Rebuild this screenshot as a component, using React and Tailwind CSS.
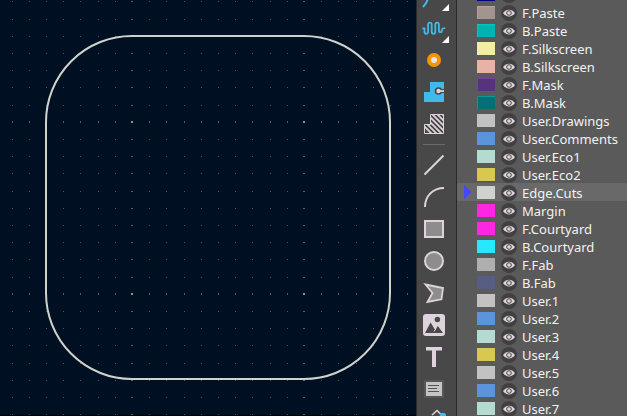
import React from "react";

const layers = [
  ["F.Paste", "bg-[#a4948f]", "border-[#b59f9a]"],
  ["B.Paste", "bg-[#00b3b3]", "border-[#00c6c6]"],
  ["F.Silkscreen", "bg-[#f2eda1]", "border-[#f2eda1]"],
  ["B.Silkscreen", "bg-[#e8b2a7]", "border-[#e8b2a7]"],
  ["F.Mask", "bg-[#58337d]", "border-[#7c3fa0]"],
  ["B.Mask", "bg-[#027074]", "border-[#04989a]"],
  ["User.Drawings", "bg-[#c2c2c2]", "border-[#c2c2c2]"],
  ["User.Comments", "bg-[#5994dc]", "border-[#5994dc]"],
  ["User.Eco1", "bg-[#b4dbd2]", "border-[#b4dbd2]"],
  ["User.Eco2", "bg-[#d8c852]", "border-[#d8c852]"],
  ["Edge.Cuts", "bg-[#d0d2cd]", "border-[#d0d2cd]"],
  ["Margin", "bg-[#ff26e2]", "border-[#ff26e2]"],
  ["F.Courtyard", "bg-[#ff26e2]", "border-[#ff26e2]"],
  ["B.Courtyard", "bg-[#26e9ff]", "border-[#26e9ff]"],
  ["F.Fab", "bg-[#afafaf]", "border-[#afafaf]"],
  ["B.Fab", "bg-[#585d84]", "border-[#585d84]"],
  ["User.1", "bg-[#c2c2c2]", "border-[#c2c2c2]"],
  ["User.2", "bg-[#5994dc]", "border-[#5994dc]"],
  ["User.3", "bg-[#b4dbd2]", "border-[#b4dbd2]"],
  ["User.4", "bg-[#d8c852]", "border-[#d8c852]"],
  ["User.5", "bg-[#c2c2c2]", "border-[#c2c2c2]"],
  ["User.6", "bg-[#5994dc]", "border-[#5994dc]"],
  ["User.7", "bg-[#b4dbd2]", "border-[#b4dbd2]"],
];

const INK = "#ded3dd";
const BLUE = "#42b8eb";

const tools = [
  {
    name: "Route track",
    menu: true,
    art: <path d="M6 14Q5 19 1 23" fill="none" stroke={BLUE} strokeWidth="2" />,
  },
  {
    name: "Tune track length",
    menu: true,
    art: (
      <path
        d="M.5 12.5h2v3.3a1.8 2 0 0 0 3.6 0V8.6a1.8 2 0 0 1 3.6 0v7.2a1.8 2 0 0 0 3.6 0V8.6a1.8 2 0 0 1 3.6 0v5.6a1.5 2 0 0 0 3 0c0-1.8.6-2 3.3-2"
        fill="none"
        stroke={BLUE}
        strokeWidth="1.8"
      />
    ),
  },
  {
    name: "Add via",
    art: <circle cx="12" cy="12" r="5" fill="#e8e4ea" stroke="#f59505" strokeWidth="4" />,
  },
  {
    name: "Add filled zone",
    art: (
      <>
        <path d="M8 2h14v20H2V12h6z" fill={BLUE} />
        <circle cx="16.500" cy="11" r="3.800" fill="#484848" />
        <path d="M16 9h6v4h-6z" fill="#484848" />
        <circle cx="16.500" cy="11" r="2.200" fill={INK} />
        <path d="M16 11h6" stroke={INK} strokeWidth="1.800" />
      </>
    ),
  },
  {
    name: "Add rule area",
    art: (
      <>
        <defs>
          <clipPath id="rule-area">
            <path d="M8 2h14v20H2V12h6z" />
          </clipPath>
        </defs>
        <path
          clipPath="url(#rule-area)"
          d="M-12 0L12 24M-7 0L17 24M-2 0L22 24M3 0L27 24M8 0L32 24M13 0L37 24M18 0L42 24"
          stroke={INK}
          strokeWidth="1.8"
        />
        <path d="M8.5 2.5h13v19h-19v-9h6z" fill="none" stroke={INK} />
      </>
    ),
  },
  { divider: true, name: "divider" },
  {
    name: "Draw line",
    art: <path d="M2.500 21.500L21.500 2.500" stroke={INK} strokeWidth="2" />,
  },
  {
    name: "Draw arc",
    art: <path d="M3 22C3 11 11 3 22 3" fill="none" stroke={INK} strokeWidth="2" />,
  },
  {
    name: "Draw rectangle",
    art: <path d="M3 4h18v16H3z" fill="#8d8d8d" stroke={INK} strokeWidth="2" />,
  },
  {
    name: "Draw circle",
    art: <circle cx="12" cy="12" r="9" fill="#8d8d8d" stroke={INK} strokeWidth="2" />,
  },
  {
    name: "Draw polygon",
    art: <path d="M3.5 3.5L21 7l-1.5 11.3L5.5 21l5-9z" fill="#8d8d8d" stroke={INK} strokeWidth="1.8" />,
  },
  {
    name: "Add image",
    art: (
      <>
        <rect x="1" y="1" width="22" height="22" rx="3" fill={INK} />
        <circle cx="15.4" cy="6.5" r="2.7" fill="#484848" />
        <path d="M3 20L8.6 9.5l4.6 7.5 2.6-4L21 20z" fill="#484848" />
        <path d="M12 18.5l2-3" stroke={INK} strokeWidth="1" />
      </>
    ),
  },
  {
    name: "Add text",
    art: <path d="M4 2h16v3.5h-6V22h-4V5.5H4z" fill={INK} />,
  },
  {
    name: "Add text box",
    art: (
      <>
        <path d="M2 3h20v18H2z" fill="#565656" />
        <path d="M4 5h16v14H4z" fill="#c5c5c5" />
        <path d="M6 8.5h11M6 11.5h9M6 14.5h11" stroke="#545454" />
      </>
    ),
  },
  {
    name: "Add dimension",
    art: (
      <>
        <path d="M10 6l5-4.5 4 4" fill="none" stroke={INK} strokeWidth="1.5" />
        <circle cx="21" cy="7" r="3.3" fill={BLUE} />
      </>
    ),
  },
];

const PITCH = 17.2;
const gridSteps = Array.from({ length: 60 }, (_, i) => i - 7);

function Grid() {
  return (
    <g shapeRendering="crispEdges">
      {gridSteps.map((r) =>
        gridSteps.map((c) => {
          const majorX = c % 10 === 0;
          const majorY = r % 10 === 0;
          const both = majorX && majorY;
          return (
            <rect
              key={`${r}:${c}`}
              x={Math.round(131.9 + c * PITCH) - (majorX ? 1 : 0)}
              y={Math.round(121.8 + r * PITCH) - (majorY ? 1 : 0)}
              width={majorX ? 2 : 1}
              height={majorY ? 2 : 1}
              fill={both ? "#8b9094" : majorX || majorY ? "#566069" : "#48535d"}
            />
          );
        })
      )}
    </g>
  );
}

function Eye() {
  return (
    <svg className="size-4" viewBox="0 0 16 16" aria-hidden="true">
      <circle cx="8" cy="8" r="8" fill="#404040" />
      <path d="M2 8C5 3.5 11 3.5 14 8C11 12.5 5 12.5 2 8z" fill={INK} />
      <circle cx="8" cy="8" r="2.3" fill={INK} stroke="#484848" />
    </svg>
  );
}

function LayerRow({ name, fill, edge, active, labelled = true }) {
  return (
    <li className={`flex h-[18px] items-start ${active ? "bg-[#696969]" : ""}`}>
      <span className="flex h-full w-5 shrink-0 items-center pl-[7px]">
        {active && (
          <svg className="h-[14px] w-2" viewBox="0 0 8 14" aria-hidden="true">
            <path d="M0 0L7.5 7L0 14z" fill="#4747ff" />
          </svg>
        )}
      </span>
      <button
        aria-label={`${name} color`}
        className={`mt-[3px] h-[13px] w-[18px] shrink-0 border-t border-l ${fill} ${edge}`}
      />
      <button aria-label={`${name} visibility`} className="mt-[2px] ml-[6px] shrink-0">
        <Eye />
      </button>
      {labelled && <span className="ml-[5px] pt-[3px] leading-[14px] whitespace-nowrap">{name}</span>}
    </li>
  );
}

export default function App() {
  return (
    <div className="flex h-screen overflow-hidden bg-[#5a5a5a] font-['Noto_Sans',sans-serif] text-[13px] text-[#f2f2f2]">
      <main className="min-w-0 flex-1 overflow-hidden border-b border-black bg-[#001023]">
        <svg className="block h-full w-full" role="img" aria-label="Board outline">
          <Grid />
          <path
            d="M132 36H304A86 86 0 0 1 390 122V293A86 86 0 0 1 304 379H132A86 86 0 0 1 46 293V122A86 86 0 0 1 132 36Z"
            fill="none"
            stroke="#d0d2cd"
            strokeWidth="2"
          />
        </svg>
      </main>
      <nav
        aria-label="Drawing tools"
        className="w-[41px] shrink-0 overflow-hidden border-r border-l border-[#2b2b2b] bg-[#484848]"
      >
        <div className="-mt-5 flex flex-col pr-[5px]">
          {tools.map((t) =>
            t.divider ? (
              <hr key={t.name} className="mx-auto my-1 w-[22px] border-t border-[#6b6b6b]" />
            ) : (
              <button key={t.name} aria-label={t.name} className="relative flex h-8 w-full items-center justify-center">
                <svg className="size-6" viewBox="0 0 24 24" aria-hidden="true">
                  {t.art}
                </svg>
                {t.menu && (
                  <svg className="absolute right-0.5 bottom-px size-[7px]" viewBox="0 0 7 7" aria-hidden="true">
                    <path d="M7 0V7H0z" fill="#fff" />
                  </svg>
                )}
              </button>
            )
          )}
        </div>
      </nav>
      <aside className="w-[170px] shrink-0 overflow-hidden">
        <ul aria-label="Layers" className="-mt-[15px]">
          <LayerRow name="B.Adhesive" fill="bg-[#000084]" edge="border-[#000084]" labelled={false} />
          {layers.map(([name, fill, edge]) => (
            <LayerRow key={name} name={name} fill={fill} edge={edge} active={name === "Edge.Cuts"} />
          ))}
        </ul>
      </aside>
    </div>
  );
}
